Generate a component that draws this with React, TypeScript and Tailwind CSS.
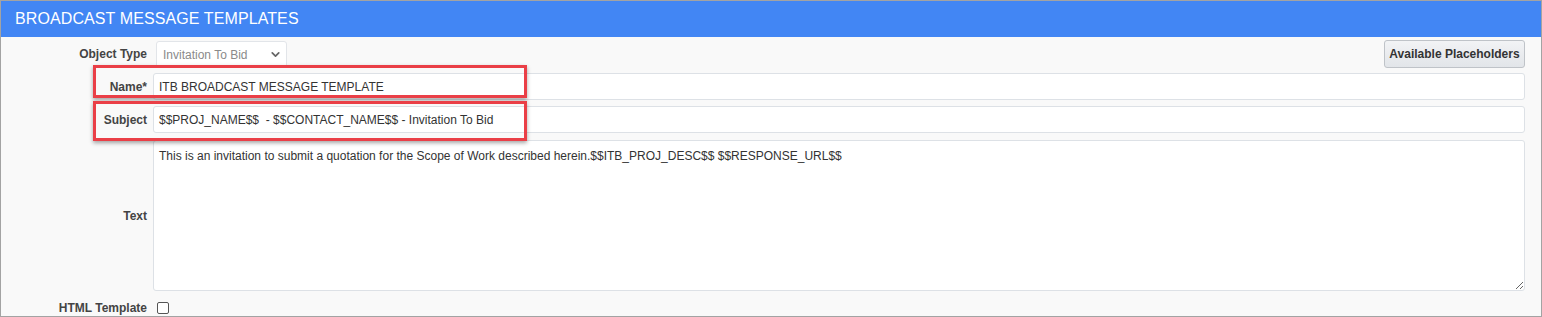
import React from 'react';
import { ChevronDown } from 'lucide-react';

const font = { fontFamily: '"Liberation Sans", Arial, sans-serif' };

function Label({ children }: { children: React.ReactNode }) {
  return <div className="w-[146px] shrink-0 text-right text-[12px] font-bold text-[#444]">{children}</div>;
}

export default function App() {
  return (
    <div style={font} className="relative w-[1542px] h-[317px] border border-[#a3a3a3] bg-[#f9f9f9] overflow-hidden">
      {/* header */}
      <div className="h-[36px] bg-[#4286f4] flex items-center pl-[14px]">
        <h1 className="text-[16px] text-white tracking-[0.1px]">BROADCAST MESSAGE TEMPLATES</h1>
      </div>

      <div className="pr-[16px]">
        {/* object type + placeholders */}
        <div className="mt-[3px] h-[28px] flex items-center">
          <Label>Object Type</Label>
          <div className="ml-[9px] mt-[1px] w-[131px] h-[27px] bg-white border border-[#e2e5e9] rounded-[3px] flex items-center justify-between pl-[6px] pr-[4px]">
            <span className="text-[12px] text-[#8a8a8a]">Invitation To Bid</span>
            <ChevronDown size={13} strokeWidth={3.2} color="#666" />
          </div>
          <button className="ml-auto w-[141px] h-[28px] rounded-[3px] border border-[#bfc3c8] bg-gradient-to-b from-[#f2f3f5] to-[#e2e5e9] text-[12px] font-bold text-[#333]">
            Available Placeholders
          </button>
        </div>

        {/* name */}
        <div className="mt-[5px] flex items-center">
          <Label>Name*</Label>
          <div className="ml-[6px] flex-1 h-[27px] bg-white border border-[#dde1e6] rounded-[3px] flex items-center pl-[5px] text-[12px] text-[#333]">
            ITB BROADCAST MESSAGE TEMPLATE
          </div>
        </div>

        {/* subject */}
        <div className="mt-[6px] flex items-center">
          <Label>Subject</Label>
          <div className="ml-[6px] flex-1 h-[27px] bg-white border border-[#dde1e6] rounded-[3px] flex items-center pl-[5px] text-[12px] text-[#333] whitespace-pre">
            {'$$PROJ_NAME$$  - $$CONTACT_NAME$$ - Invitation To Bid'}
          </div>
        </div>

        {/* text */}
        <div className="mt-[7px] flex items-center">
          <Label>Text</Label>
          <textarea
            readOnly
            defaultValue="This is an invitation to submit a quotation for the Scope of Work described herein.$$ITB_PROJ_DESC$$ $$RESPONSE_URL$$"
            style={font}
            className="ml-[6px] flex-1 h-[151px] bg-white border border-[#dde1e6] rounded-[3px] px-[5px] pt-[6px] text-[12px] leading-[18px] text-[#333] outline-none"
          />
        </div>

        {/* html template */}
        <div className="mt-[10px] h-[14px] flex items-center">
          <Label>HTML Template</Label>
          <div className="ml-[10px] w-[12px] h-[12px] bg-white border border-[#555] rounded-[2px]" />
        </div>
      </div>

      {/* highlight boxes */}
      <div className="absolute left-[92px] top-[64px] w-[434px] h-[33px] border-[3px] border-[#ea3f47] shadow-[0_2px_4px_rgba(0,0,0,0.35)]" />
      <div className="absolute left-[92px] top-[100px] w-[434px] h-[40px] border-[3px] border-[#ea3f47] shadow-[0_2px_4px_rgba(0,0,0,0.35)]" />
    </div>
  );
}
